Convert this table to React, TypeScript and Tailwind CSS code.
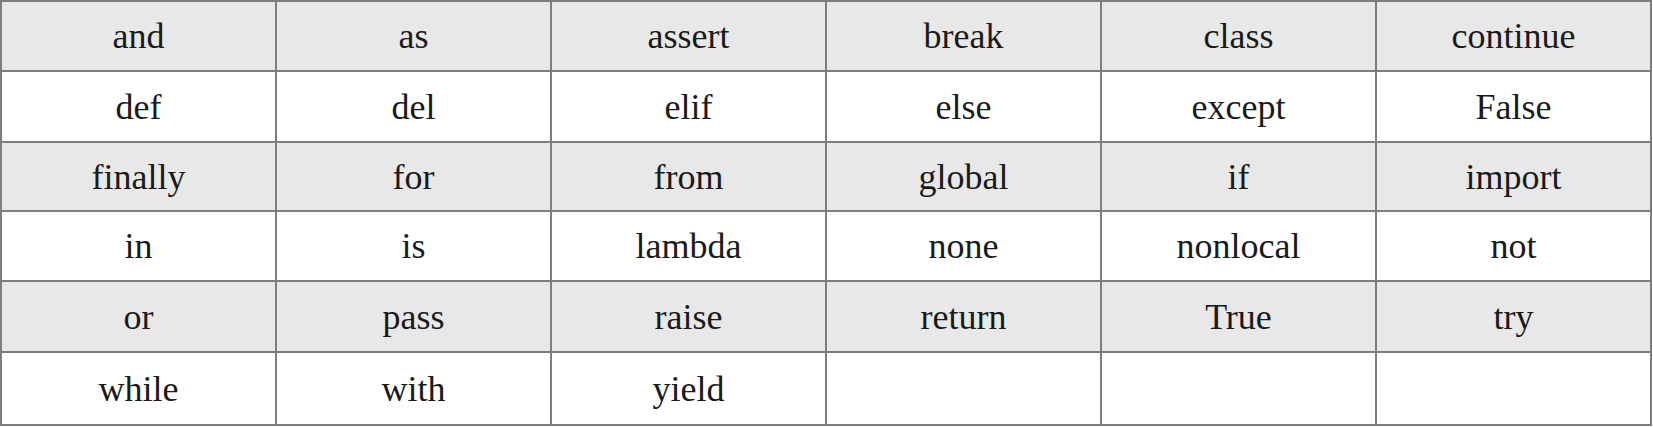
import React from "react";

const rows: string[][] = [
  ["and", "as", "assert", "break", "class", "continue"],
  ["def", "del", "elif", "else", "except", "False"],
  ["finally", "for", "from", "global", "if", "import"],
  ["in", "is", "lambda", "none", "nonlocal", "not"],
  ["or", "pass", "raise", "return", "True", "try"],
  ["while", "with", "yield", "", "", ""],
];

export default function App() {
  return (
    <div className="w-[1653px] h-[427px] bg-white">
      <div
        className="grid w-[1652px] grid-cols-[repeat(6,275px)] grid-rows-[70px_71px_69px_70px_71px_73px] border-l-2 border-t-2 border-[#7d7d7d] text-[36px] text-[#1a1a1a]"
        style={{ fontFamily: '"Liberation Serif", "Times New Roman", serif' }}
      >
        {rows.map((row, ri) =>
          row.map((cell, ci) => (
            <div
              key={`${ri}-${ci}`}
              className={`flex items-center justify-center border-r-2 border-b-2 border-[#7d7d7d] leading-normal ${
                ri % 2 === 0 ? "bg-[#e8e8e8]" : "bg-white"
              }`}
            >
              {cell}
            </div>
          ))
        )}
      </div>
    </div>
  );
}
